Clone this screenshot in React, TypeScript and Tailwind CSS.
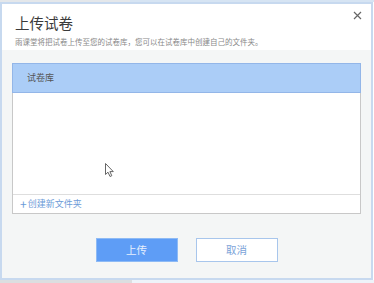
import React from "react";

const font = { fontFamily: '"Noto Sans CJK SC", "Noto Sans", sans-serif' };

function CloseIcon() {
  return (
    <svg width="9" height="9" viewBox="0 0 9 9" className="block">
      <path d="M1 1L8 8M8 1L1 8" stroke="#666" strokeWidth="1.2" />
    </svg>
  );
}

function Cursor() {
  return (
    <svg width="10" height="15" viewBox="0 0 10 15" className="absolute left-[105px] top-[163px]">
      <path
        d="M0.5 0.5V11.5L3 9.2L5 13.5L6.8 12.7L4.9 8.6H8.3Z"
        fill="#fff"
        stroke="#555"
        strokeWidth="0.9"
        strokeLinejoin="round"
      />
    </svg>
  );
}

export default function App() {
  return (
    <div className="relative w-[374px] h-[283px] overflow-hidden bg-white" style={font}>
      <div className="flex h-[2px]">
        <div className="w-[130px] bg-[#e4e7ea]" />
        <div className="flex-1 bg-[#d6e4f3]" />
      </div>

      <div className="w-[373px] h-[278px] border-2 border-[#c7d9ef] flex flex-col">
        <div className="relative bg-white h-[46px] px-[13px] pt-[9px]">
          <div className="text-[14.5px] leading-[20px] text-[#3a3a3a]">上传试卷</div>
          <div className="mt-[4px] text-[7.5px] leading-[10px] text-[#888]">
            雨课堂将把试卷上传至您的试卷库，您可以在试卷库中创建自己的文件夹。
          </div>
          <button className="absolute right-[8px] top-[6px] p-[1px]">
            <CloseIcon />
          </button>
        </div>

        <div className="flex-1 bg-[#f4f6f6] px-[10px] pt-[13px] flex flex-col">
          <div className="h-[151px] border border-[#c8c8c8] bg-white flex flex-col">
            <div className="-mx-px -mt-px h-[30px] border border-[#93b6e8] bg-[#abcdf7] flex items-center pl-[14px] text-[9px] text-[#555]">
              试卷库
            </div>
            <div className="flex-1" />
            <div className="h-[19px] border-t border-[#dedede] flex items-center pl-[7px] text-[9px] text-[#6c9bd8]">
              <span className="text-[12px] leading-none mr-[1px]">+</span>
              创建新文件夹
            </div>
          </div>

          <div className="mt-[24px] flex justify-center gap-[18px]">
            <button className="w-[82px] h-[24px] bg-[#5e9df6] border border-[#8dbaf5] text-white/85 text-[10.5px]">
              上传
            </button>
            <button className="w-[82px] h-[24px] bg-white border border-[#a8c6ec] text-[#7aa2d8] text-[10.5px]">
              取消
            </button>
          </div>
        </div>
      </div>

      <div className="flex h-[3px]">
        <div className="w-[132px] bg-[#dcdee0]" />
        <div className="flex-1 bg-[#eef3f9]" />
      </div>

      <Cursor />
    </div>
  );
}
